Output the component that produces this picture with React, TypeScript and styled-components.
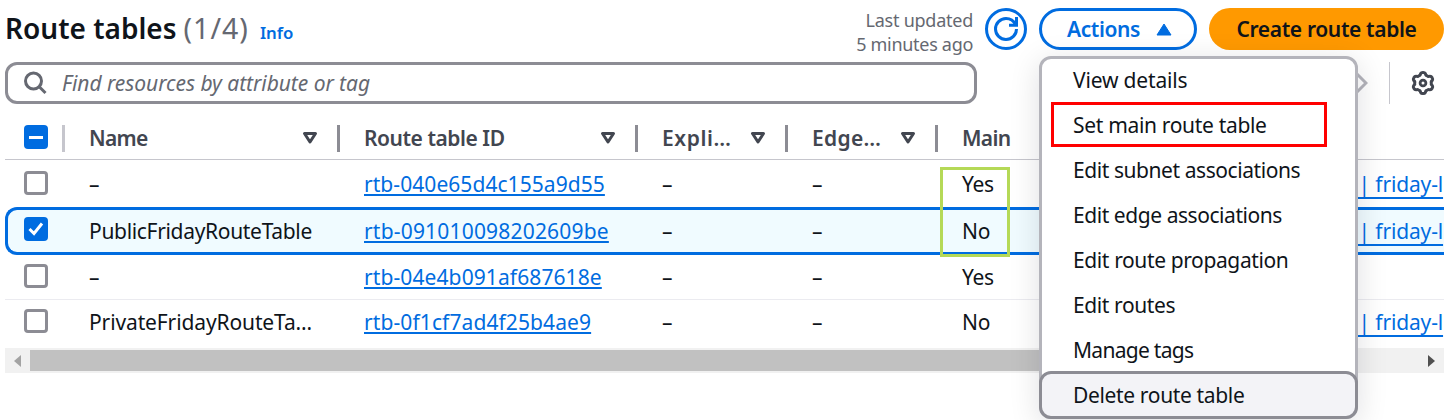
import React from "react";
import styled, { createGlobalStyle, css } from "styled-components";

const Global = createGlobalStyle`
  * { box-sizing: border-box; }
  body { margin: 0; background: #fff; overflow: hidden; }
`;

const Page = styled.main`
  position: relative;
  width: 1444px;
  height: 420px;
  padding: 8px 0 0 5px;
  overflow: hidden;
  background: #fff;
  color: #0f141a;
  font: 400 21px/30px "Noto Sans", "Open Sans", sans-serif;
`;

const Label = styled.span<{ $ls?: number }>`
  letter-spacing: ${(p) => p.$ls ?? 0}px;
  white-space: pre;
`;

const Header = styled.header`
  display: flex;
  height: 42px;
  align-items: center;
`;

const Title = styled.h1`
  margin: 0;
  padding-top: 2px;
  flex: 1;
  display: flex;
  align-items: baseline;
  font-size: 28px;
  line-height: 42px;
  font-weight: 600;
`;

const Counter = styled(Label)`
  margin-left: 7px;
  font-size: 28.5px;
  font-weight: 400;
  color: #656871;
`;

const Info = styled(Label)`
  margin-left: 11px;
  font-size: 16.8px;
  color: #006ce0;
`;

const Updated = styled.div`
  display: flex;
  flex-direction: column;
  align-items: flex-end;
  margin-right: 12px;
  padding-top: 6px;
  font-size: 18px;
  line-height: 24px;
  color: #656871;
`;

const buttonBase = css`
  height: 42px;
  border-radius: 21px;
  display: flex;
  align-items: center;
  justify-content: center;
  padding: 0;
  font: 600 21px/30px "Noto Sans", "Open Sans", sans-serif;
`;

const OutlineButton = styled.button<{ $w: number }>`
  ${buttonBase}
  width: ${(p) => p.$w}px;
  margin-right: 12px;
  gap: 16px;
  border: 3px solid #006ce0;
  background: #fff;
  color: #006ce0;
`;

const MenuButton = styled(OutlineButton)`
  padding-left: 3px;
`;

const PrimaryButton = styled.button`
  ${buttonBase}
  width: 235px;
  border: 0;
  background: #ff9900;
  color: #0f141a;
`;

const Tools = styled.div`
  display: flex;
  height: 42px;
  margin-top: 12px;
`;

const Search = styled.div`
  display: flex;
  align-items: center;
  gap: 15px;
  width: 972px;
  padding-left: 15px;
  border: 3px solid #8c8c94;
  border-radius: 12px;
  color: #656871;
  font-style: italic;
`;

const Paging = styled.div`
  display: flex;
  align-items: center;
  justify-content: flex-end;
  width: 413px;
  padding-right: 21px;
  border-right: 1px solid #c6c6cd;
`;

const Settings = styled.div`
  display: flex;
  align-items: center;
  padding-left: 20px;
`;

const cols = "60px 275px 298px 150px 150px 410px 1fr";

const HeadRow = styled.div`
  display: grid;
  grid-template-columns: ${cols};
  align-items: center;
  height: 56px;
  padding-top: 14px;
  border-bottom: 1px solid #c6c6cd;
  color: #424650;
  font-weight: 600;
`;

const HeadCell = styled.div<{ $last?: boolean }>`
  display: flex;
  align-items: center;
  justify-content: space-between;
  height: 27px;
  padding: 0 19px 1px 24px;
  border-right: ${(p) => (p.$last ? "0" : "3px solid #8c8c94")};
`;

const HeadSelect = styled.div`
  display: flex;
  align-items: flex-start;
  height: 27px;
  width: 60px;
  padding-left: 19px;
  border-right: 3px solid #c6c6cd;
`;

const Row = styled.div<{ $h: number; $pb: number; $line?: boolean; $selected?: boolean }>`
  display: grid;
  grid-template-columns: ${cols};
  align-items: center;
  height: ${(p) => p.$h}px;
  padding-bottom: ${(p) => p.$pb}px;
  ${(p) => p.$line && css`border-bottom: 1px solid #ebebf0;`}
  ${(p) =>
    p.$selected &&
    css`
      border: 3px solid #006ce0;
      border-right: 0;
      border-radius: 12px 0 0 12px;
      background: #f0fbff;
      grid-template-columns: 57px 275px 298px 150px 150px 410px 1fr;
    `}
`;

const Cell = styled.div`
  padding: 2px 0 0 24px;
  white-space: nowrap;
`;

const CheckCell = styled.div<{ $selected?: boolean }>`
  padding-left: ${(p) => (p.$selected ? 16 : 19)}px;
  margin-top: ${(p) => (p.$selected ? -2 : 0)}px;
`;

const Check = styled.div<{ $on?: boolean }>`
  display: flex;
  align-items: center;
  justify-content: center;
  width: 24px;
  height: 24px;
  border-radius: 4px;
  border: ${(p) => (p.$on ? "0" : "3px solid #8c8c94")};
  background: ${(p) => (p.$on ? "#006ce0" : "#fff")};
`;

const Link = styled.a<{ $ls?: number; $low?: boolean }>`
  color: #006ce0;
  letter-spacing: ${(p) => p.$ls ?? 0}px;
  text-decoration: underline;
  text-decoration-thickness: 2px;
  text-decoration-skip-ink: none;
  text-underline-offset: ${(p) => (p.$low ? 5 : 2)}px;
  white-space: pre;
`;

const VpcCell = styled.div`
  padding-top: 2px;
  white-space: nowrap;
`;

const ScrollBar = styled.div`
  display: flex;
  align-items: center;
  height: 25px;
  background: #f1f1f1;
`;

const Arrow = styled.div`
  display: flex;
  align-items: center;
  justify-content: center;
  width: 25px;
`;

const Thumb = styled.div`
  width: 1100px;
  height: 21px;
  margin-right: auto;
  background: #c1c1c1;
`;

const Menu = styled.div`
  position: absolute;
  left: 1039px;
  top: 56px;
  width: 319px;
  height: 363px;
  border: 3px solid #b4b4bb;
  border-radius: 12px;
  background: #fff;
  box-shadow: 0 6px 30px 1px rgba(0, 7, 22, 0.12);
`;

const MenuList = styled.div`
  display: flex;
  flex-direction: column;
  margin: -2px -3px 0;
`;

const MenuItem = styled.div<{ $active?: boolean }>`
  display: flex;
  align-items: center;
  height: 45px;
  padding-left: 34px;
  ${(p) =>
    p.$active &&
    css`
      height: 48px;
      margin-top: -1px;
      padding: 0 0 1px 31px;
      border: 3px solid #8c8c94;
      border-radius: 12px;
      background: #f3f3f7;
    `}
`;

const Marker = styled.div<{ $x: number; $y: number; $w: number; $h: number; $c: string }>`
  position: absolute;
  left: ${(p) => p.$x}px;
  top: ${(p) => p.$y}px;
  width: ${(p) => p.$w}px;
  height: ${(p) => p.$h}px;
  border: 3px solid ${(p) => p.$c};
`;

const SortIcon = () => (
  <svg width="16" height="14" viewBox="0 0 16 14" fill="none" stroke="#424650" strokeWidth="3" strokeLinejoin="round">
    <path d="M2.500 2.500h11L8 11z" />
  </svg>
);

const RefreshIcon = () => (
  <svg width="24" height="24" viewBox="0 0 16 16" fill="none" stroke="#006ce0" strokeWidth="2">
    <path d="M15 8c0 3.87-3.13 7-7 7s-7-3.13-7-7 3.13-7 7-7c2.79 0 5.2 1.63 6.33 4" />
    <path d="M10 5.500h5V0" />
  </svg>
);

const polar = (deg: number, r: number) => {
  const a = (deg * Math.PI) / 180;
  return `${(13 + r * Math.cos(a)).toFixed(2)} ${(13 + r * Math.sin(a)).toFixed(2)}`;
};

const gearPath =
  [-90, -30, 30, 90, 150, 210]
    .map(
      (a, i) =>
        `${i ? "L" : "M"}${polar(a - 14, 9.8)}Q${polar(a - 9, 10.8)} ${polar(a, 10.6)}Q${polar(a + 9, 10.8)} ${polar(a + 14, 9.8)}Q${polar(a + 20, 7.8)} ${polar(a + 30, 8.4)}Q${polar(a + 40, 7.8)} ${polar(a + 46, 9.8)}`
    )
    .join("") + "Z";

const GearIcon = () => (
  <svg width="26" height="26" viewBox="0 0 26 26" fill="none" stroke="#424650" strokeWidth="3" strokeLinejoin="round">
    <path d={gearPath} />
    <circle cx="13" cy="13" r="2.900" strokeWidth="2.800" />
  </svg>
);

const rows = [
  { name: "–", id: "rtb-040e65d4c155a9d55", idLs: 0.06, main: "Yes", vpc: true, h: 47, pb: 1, ls: 0 },
  { name: "PublicFridayRouteTable", id: "rtb-091010098202609be", idLs: 0.19, main: "No", vpc: true, h: 48, pb: 2, ls: -0.32, selected: true },
  { name: "–", id: "rtb-04e4b091af687618e", idLs: 0.1, main: "Yes", h: 45, pb: 2, ls: 0, line: true },
  { name: "PrivateFridayRouteTa…", id: "rtb-0f1cf7ad4f25b4ae9", idLs: 0.1, main: "No", vpc: true, h: 48, pb: 6, ls: -0.12 },
];

const menu: [string, number][] = [
  ["View details", -0.17],
  ["Set main route table", -0.32],
  ["Edit subnet associations", -0.43],
  ["Edit edge associations", -0.44],
  ["Edit route propagation", -0.38],
  ["Edit routes", -0.4],
  ["Manage tags", -0.72],
  ["Delete route table", -0.35],
];

const heads: [string, number][] = [
  ["Name", -0.7],
  ["Route table ID", -0.45],
  ["Expli…", 0.6],
  ["Edge…", 0.3],
];

export default function App() {
  return (
    <Page>
      <Global />
      <Header>
        <Title>
          <Label>Route tables</Label>
          <Counter $ls={1}>(1/4)</Counter>
          <Info>Info</Info>
        </Title>
        <Updated>
          <Label $ls={-0.25}>Last updated</Label>
          <Label $ls={-0.3}>5 minutes ago</Label>
        </Updated>
        <OutlineButton $w={42} aria-label="Refresh">
          <RefreshIcon />
        </OutlineButton>
        <MenuButton $w={158}>
          <Label $ls={-0.4}>Actions</Label>
          <svg width="16" height="13" viewBox="0 0 16 13">
            <path d="M8 1L15 12H1z" fill="#006ce0" stroke="#006ce0" strokeLinejoin="round" />
          </svg>
        </MenuButton>
        <PrimaryButton>
          <Label $ls={-0.35}>Create route table</Label>
        </PrimaryButton>
      </Header>
      <Tools>
        <Search>
          <svg width="24" height="24" viewBox="0 0 24 24" fill="none" stroke="#656871" strokeWidth="3">
            <circle cx="10.500" cy="10" r="8" />
            <path d="M16 15.500l6.500 6.500" />
          </svg>
          <Label $ls={-0.05}>Find resources by attribute or tag</Label>
        </Search>
        <Paging>
          <svg width="13" height="24" viewBox="0 0 13 24" fill="none" stroke="#b4b4bb" strokeWidth="3">
            <path d="M2 3l9 9-9 9" />
          </svg>
        </Paging>
        <Settings>
          <GearIcon />
        </Settings>
      </Tools>
      <HeadRow>
        <HeadSelect>
          <Check $on>
            <svg width="14" height="3"><rect width="14" height="3" fill="#fff" /></svg>
          </Check>
        </HeadSelect>
        {heads.map(([t, ls]) => (
          <HeadCell key={t}>
            <Label $ls={ls}>{t}</Label>
            <SortIcon />
          </HeadCell>
        ))}
        <HeadCell $last>
          <Label $ls={-0.7}>Main</Label>
        </HeadCell>
      </HeadRow>
      {rows.map((r) => (
        <Row key={r.id} $h={r.h} $pb={r.pb} $line={r.line} $selected={r.selected}>
          <CheckCell $selected={r.selected}>
            <Check $on={r.selected}>
              {r.selected && (
                <svg width="16" height="16" viewBox="0 0 16 16" fill="none" stroke="#fff" strokeWidth="3">
                  <path d="M1.500 8l4.500 4.500L14 2.500" />
                </svg>
              )}
            </Check>
          </CheckCell>
          <Cell><Label $ls={r.ls}>{r.name}</Label></Cell>
          <Cell><Link $ls={r.idLs}>{r.id}</Link></Cell>
          <Cell>–</Cell>
          <Cell>–</Cell>
          <Cell><Label $ls={-0.3}>{r.main}</Label></Cell>
          <VpcCell>{r.vpc && <Link $low $ls={-0.15}>  | friday-l</Link>}</VpcCell>
        </Row>
      ))}
      <ScrollBar>
        <Arrow>
          <svg width="7" height="12"><path d="M7 0v12L0 6z" fill="#a3a3a3" /></svg>
        </Arrow>
        <Thumb />
        <Arrow>
          <svg width="7" height="12"><path d="M0 0v12l7-6z" fill="#505050" /></svg>
        </Arrow>
      </ScrollBar>
      <Menu>
        <MenuList>
          {menu.map(([t, ls], i) => (
            <MenuItem key={t} $active={i === 7}>
              <Label $ls={ls}>{t}</Label>
            </MenuItem>
          ))}
        </MenuList>
      </Menu>
      <Marker $x={940} $y={167} $w={70} $h={90} $c="#b5d957" />
      <Marker $x={1051} $y={102} $w={276} $h={45} $c="#ff0000" />
    </Page>
  );
}
